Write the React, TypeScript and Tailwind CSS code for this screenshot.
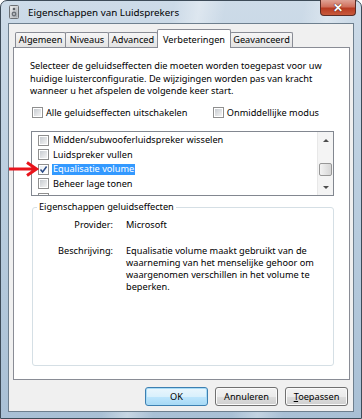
import React from "react";

const F = "font-['Noto_Sans','Open_Sans',sans-serif]";

function CheckBox({ checked = false }: { checked?: boolean }) {
  return (
    <span className="relative inline-block w-[11px] h-[11px] border border-[#8f8f8f] bg-white shrink-0">
      {checked ? (
        <span className="absolute inset-[1px] bg-gradient-to-br from-[#e9eef3] to-[#ffffff]" />
      ) : (
        <span className="absolute inset-[1px] bg-gradient-to-br from-[#c8ccd1] to-[#f4f4f4]" />
      )}
      {checked && (
        <svg className="absolute left-0 top-0" width="9" height="9" viewBox="0 0 9 9">
          <path d="M1.5 4.5 L3.6 7 L7.6 1.5" stroke="#2a4a86" strokeWidth="1.5" fill="none" />
        </svg>
      )}
    </span>
  );
}

function Tab({ label, w, selected = false, first = false }: { label: string; w: string; selected?: boolean; first?: boolean }) {
  if (selected) {
    return (
      <div
        className={`${w} -ml-px h-[19px] relative z-10 border border-b-0 border-[#898c95] bg-white rounded-t-[2px] flex items-start justify-center pt-[3px] text-[9.2px] text-black mb-[-1px]`}
      >
        {label}
      </div>
    );
  }
  return (
    <div
      className={`${w} ${first ? "" : "-ml-px"} h-[15px] border border-b-0 border-[#898c95] bg-gradient-to-b from-[#f6f6f6] to-[#e3e3e3] rounded-t-[2px] flex items-center justify-center text-[9.2px] text-black`}
    >
      {label}
    </div>
  );
}

function Button({ children, def = false }: { children: React.ReactNode; def?: boolean }) {
  return (
    <div
      className={`w-[63px] h-[19px] rounded-[3px] border ${def ? "border-[#3c7fb1] shadow-[inset_0_0_0_1px_#a8dcf7]" : "border-[#707070] shadow-[inset_0_0_0_1px_#fbfbfb]"} flex items-center justify-center text-[9.2px] text-black`}
      style={{
        background: def
          ? "linear-gradient(#eaf6fd 0%, #d9f0fc 50%, #bee6fd 50%, #a7d9f5 100%)"
          : "linear-gradient(#f2f2f2 0%, #ebebeb 50%, #dddddd 50%, #cfcfcf 100%)",
      }}
    >
      {children}
    </div>
  );
}

export default function App() {
  const items = [
    { label: "Midden/subwooferluidspreker wisselen", checked: false },
    { label: "Luidspreker vullen", checked: false },
    { label: "Equalisatie volume", checked: true, sel: true },
    { label: "Beheer lage tonen", checked: false },
  ];
  return (
    <div className={`${F} relative w-[362px] h-[419px] overflow-hidden`}>
      <div
        className="relative w-[362px] h-[419px] rounded-t-[7px] border border-[#3d4b58] flex flex-col"
        style={{
          background:
            "linear-gradient(100deg, rgba(255,255,255,0.0) 40%, rgba(255,255,255,0.35) 46%, rgba(255,255,255,0) 52%, rgba(255,255,255,0) 70%, rgba(255,255,255,0.3) 76%, rgba(255,255,255,0) 82%), linear-gradient(180deg, #cddbe8 0%, #bccfe0 40%, #a9c0d5 100%)",
        }}
      >
        {/* title bar */}
        <div className="h-[22px] flex items-center pl-[6px] shrink-0">
          <svg width="14" height="14" viewBox="0 0 14 14" className="shrink-0">
            <defs>
              <linearGradient id="g" x1="0" y1="0" x2="1" y2="1">
                <stop offset="0" stopColor="#f2f3f4" />
                <stop offset="1" stopColor="#9da2a7" />
              </linearGradient>
            </defs>
            <rect x="2.5" y="0.5" width="9" height="13" rx="1" fill="#d4d6d8" stroke="#6d7175" />
            <rect x="3.5" y="1.5" width="7" height="11" fill="url(#g)" />
            <circle cx="7" cy="4" r="1.3" fill="#5b6066" />
            <circle cx="7" cy="9" r="2.4" fill="#6c7177" />
            <circle cx="7" cy="9" r="1" fill="#c9ccd0" />
          </svg>
          <span className="ml-[7px] mt-[1px] text-[9.8px] text-black leading-none">Eigenschappen van Luidsprekers</span>
        </div>

        {/* client area */}
        <div className="mx-[7px] h-[389px] border border-[#6e7f8e] bg-[#f0f0f0] flex flex-col">
          {/* tabs */}
          <div className="mt-[4px] ml-[6px] flex items-end h-[19px]">
            <Tab label="Algemeen" w="w-[51px]" first />
            <Tab label="Niveaus" w="w-[44px]" />
            <Tab label="Advanced" w="w-[50px]" />
            <Tab label="Verbeteringen" w="w-[74px]" selected />
            <Tab label="Geavanceerd" w="w-[63px]" />
          </div>
          {/* panel */}
          <div className="ml-[4px] w-[337px] h-[333px] border border-[#898c95] bg-white flex flex-col pl-[16px] text-[9.2px] text-black leading-[12.5px]">
            <div className="mt-[12px] whitespace-nowrap">
              Selecteer de geluidseffecten die moeten worden toegepast voor uw
              <br />
              huidige luisterconfiguratie. De wijzigingen worden pas van kracht
              <br />
              wanneer u het afspelen de volgende keer start.
            </div>
            <div className="mt-[9px] flex items-center justify-between pr-[30px] pl-[2px]">
              <div className="flex items-center gap-[3px]">
                <CheckBox />
                <span>Alle geluidseffecten uitschakelen</span>
              </div>
              <div className="flex items-center gap-[3px]">
                <CheckBox />
                <span>Onmiddellijke modus</span>
              </div>
            </div>
            {/* list box */}
            <div className="mt-[12px] ml-[1px] w-[303px] h-[65px] border border-[#828790] bg-white flex overflow-hidden">
              <div className="flex-1 pt-[1px] pl-[6px] overflow-hidden">
                {items.map((it) => (
                  <div key={it.label} className="h-[14.5px] flex items-center gap-[3px] whitespace-nowrap">
                    <CheckBox checked={it.checked} />
                    <span className={`px-[1px] h-[11px] flex items-center ${it.sel ? "bg-[#3399ff] text-white" : ""}`}>{it.label}</span>
                  </div>
                ))}
                <div className="h-[14.5px] flex items-center">
                  <CheckBox />
                </div>
              </div>
              <div className="w-[16px] h-full bg-[#f4f4f4] border-l border-[#e8e8e8] flex flex-col items-center">
                <div className="h-[16px] w-full flex items-center justify-center">
                  <svg width="6" height="4" viewBox="0 0 6 4">
                    <path d="M0 4 L3 1 L6 4 Z" fill="#4d4d4d" />
                  </svg>
                </div>
                <div className="mt-[15px] w-[13px] h-[13px] rounded-[2px] border border-[#979797] bg-gradient-to-r from-[#f3f3f3] to-[#d6d6d6]" />
                <div className="flex-1" />
                <div className="h-[14px] w-full flex items-center justify-center">
                  <svg width="6" height="4" viewBox="0 0 6 4">
                    <path d="M0 0 L3 3 L6 0 Z" fill="#4d4d4d" />
                  </svg>
                </div>
              </div>
            </div>
            {/* group box */}
            <div className="relative mt-[11px] ml-[2px] w-[302px] h-[159px] border border-[#d5dfe5] rounded-[3px]">
              <span className="absolute left-[4px] top-[-7px] bg-white px-[2px] leading-[12px]">Eigenschappen geluidseffecten</span>
              <div className="mt-[11px] flex">
                <div className="w-[80px] text-right">Provider:</div>
                <div className="ml-[13px]">Microsoft</div>
              </div>
              <div className="mt-[13px] flex">
                <div className="w-[80px] text-right">Beschrijving:</div>
                <div className="ml-[13px] whitespace-nowrap leading-[12px]">
                  Equalisatie volume maakt gebruikt van de
                  <br />
                  waarneming van het menselijke gehoor om
                  <br />
                  waargenomen verschillen in het volume te
                  <br />
                  beperken.
                </div>
              </div>
            </div>
          </div>
          {/* buttons */}
          <div className="mt-[7px] mr-[5px] flex justify-end gap-[7px]">
            <Button def>OK</Button>
            <Button>Annuleren</Button>
            <Button>
              <span>
                <span className="underline">T</span>oepassen
              </span>
            </Button>
          </div>
        </div>
      </div>

      {/* close button */}
      <div
        className="absolute left-[320px] top-0 w-[36px] h-[16px] rounded-b-[4px] border border-t-0 border-[#5b2c25] flex items-center justify-center"
        style={{ background: "linear-gradient(#e0a396 0%, #d0705c 45%, #b83b22 55%, #c85a3c 100%)" }}
      >
        <span className="text-white font-bold text-[12px] leading-none [text-shadow:0_0_1px_#4a1a10,0_0_1px_#4a1a10]">✕</span>
      </div>

      {/* red arrow annotation */}
      <svg className="absolute left-[8px] top-[160px]" width="32" height="18" viewBox="0 0 32 18">
        <path d="M1 9 L28 9" stroke="#e8141c" strokeWidth="3" strokeLinecap="butt" />
        <path d="M19 2.5 L28.5 9 L19 15.5" stroke="#e8141c" strokeWidth="3" fill="none" strokeLinejoin="miter" />
      </svg>
    </div>
  );
}
